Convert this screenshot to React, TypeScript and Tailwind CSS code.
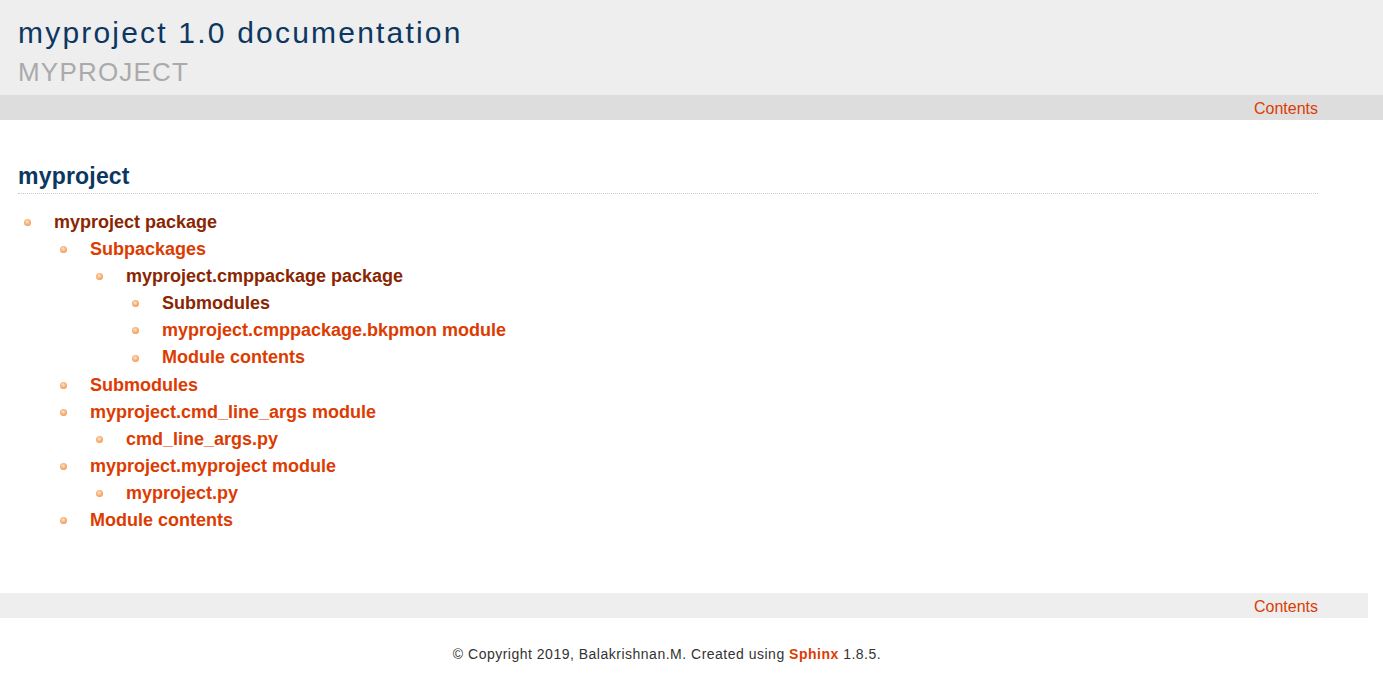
type TocItem = {
  label: string;
  visited?: boolean;
  children?: TocItem[];
};

const TOC: TocItem[] = [
  {
    label: "myproject package",
    visited: true,
    children: [
      {
        label: "Subpackages",
        children: [
          {
            label: "myproject.cmppackage package",
            visited: true,
            children: [
              { label: "Submodules", visited: true },
              { label: "myproject.cmppackage.bkpmon module" },
              { label: "Module contents" },
            ],
          },
        ],
      },
      { label: "Submodules" },
      {
        label: "myproject.cmd_line_args module",
        children: [{ label: "cmd_line_args.py" }],
      },
      {
        label: "myproject.myproject module",
        children: [{ label: "myproject.py" }],
      },
      { label: "Module contents" },
    ],
  },
];

function Bullet() {
  return (
    <span className="h-[7px] w-[7px] shrink-0 rounded-full bg-[radial-gradient(circle_at_45%_40%,#fde6cc_0%,#f7b27a_45%,#e8843e_100%)]" />
  );
}

function TocList({ items, nested }: { items: TocItem[]; nested?: boolean }) {
  return (
    <ul className={nested ? "pl-[36px]" : "pl-[6px]"}>
      {items.map((item, i) => (
        <li key={item.label + i}>
          <div className="flex items-center gap-[23px] leading-[27.1px]">
            <Bullet />
            <a
              href="#"
              className={`text-[18px] font-bold ${
                item.visited ? "text-[#892601]" : "text-[#dc3c01]"
              }`}
            >
              {item.label}
            </a>
          </div>
          {item.children && <TocList items={item.children} nested />}
        </li>
      ))}
    </ul>
  );
}

function NavBar({ bg, full }: { bg: string; full?: boolean }) {
  return (
    <div
      className={`${bg} ${
        full ? "w-full pr-[65px]" : "w-[1368px] pr-[50px]"
      } h-[25px] pt-[2px] text-right text-[16px] leading-[23px]`}
    >
      <a href="#" className="text-[#dc3c01]">
        Contents
      </a>
    </div>
  );
}

export default function App() {
  return (
    <div className="min-h-screen bg-white font-['Liberation_Sans',Arial,sans-serif] text-[#333]">
      {/* header */}
      <div className="bg-[#eeeeee] px-[18px] pb-[8px] pt-[15px]">
        <h1 className="text-[30px] leading-[36px] tracking-[2.2px] text-[#0c3762]">
          myproject 1.0 documentation
        </h1>
        <h2 className="mt-[6px] text-[26px] uppercase leading-[30px] tracking-[1.2px] text-[#aaaaaa]">
          myproject
        </h2>
      </div>
      <NavBar bg="bg-[#dddddd]" full />

      {/* content */}
      <div className="ml-[18px] mr-[65px] pt-[42px]">
        <h2 className="border-b border-dotted border-[#cccccc] pb-[3px] text-[23px] font-bold leading-[28px] tracking-[0.2px] text-[#0c3762]">
          myproject
        </h2>
        <div className="mt-[15px]">
          <TocList items={TOC} />
        </div>
      </div>

      {/* footer */}
      <div className="mt-[59px]">
        <NavBar bg="bg-[#eeeeee]" />
      </div>
      <div className="mt-[27px] w-[1334px] text-center text-[14px] leading-[18px] tracking-[0.5px] text-[#333333]">
        © Copyright 2019, Balakrishnan.M. Created using{" "}
        <a href="#" className="font-bold text-[#dc3c01]">
          Sphinx
        </a>{" "}
        1.8.5.
      </div>
    </div>
  );
}
